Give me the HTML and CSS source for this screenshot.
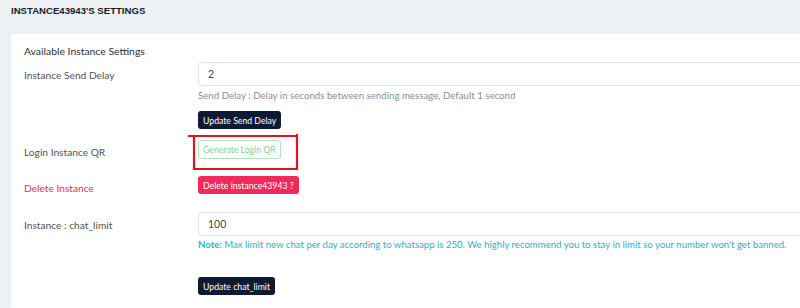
FILE: index.html
```html
<!DOCTYPE html>
<html lang="en">
<head>
    <meta charset="UTF-8">
    <meta name="viewport" content="width=device-width, initial-scale=1.0">
    <title>Instance Settings</title>
    <link rel="stylesheet" href="styles.css">
</head>
<body>

    <h1 class="page-title">INSTANCE43943'S SETTINGS</h1>

    <div class="card">
        <div class="card-title">Available Instance Settings</div>

        <div class="form-row">
            <label class="row-label">Instance Send Delay</label>
            <div class="row-body">
                <input class="field" type="text" value="2">
                <div class="help">Send Delay : Delay in seconds between sending message, Default 1 second</div>
                <button class="btn btn-dark btn-first">Update Send Delay</button>
            </div>
        </div>

        <div class="form-row row-qr">
            <label class="row-label label-btn">Login Instance QR</label>
            <div class="row-body marked">
                <button class="btn btn-outline">Generate Login QR</button>
                <!-- annotation drawn over the button -->
                <svg class="mark" width="112" height="38" viewBox="0 0 112 38">
                    <path d="M0 2 H110 M6 2 V36 M6 35 H110 M109 0 V36" stroke="#e0141e" stroke-width="2.2" fill="none"/>
                </svg>
            </div>
        </div>

        <div class="form-row row-delete">
            <label class="row-label label-btn danger">Delete Instance</label>
            <div class="row-body">
                <button class="btn btn-danger">Delete instance43943 ?</button>
            </div>
        </div>

        <div class="form-row row-limit">
            <label class="row-label">Instance : chat_limit</label>
            <div class="row-body">
                <input class="field" type="text" value="100">
                <div class="help note"><b>Note:</b> Max limit new chat per day according to whatsapp is 250. We highly recommend you to stay in limit so your number won't get banned.</div>
                <button class="btn btn-dark btn-last">Update chat_limit</button>
            </div>
        </div>
    </div>

</body>
</html>
```

FILE: styles.css
```css
:root {
    --bg: #eef1f4;
    --surface: #ffffff;
    --navy: #0e1a34;
    --label: #4f545b;
    --muted: #8b8f95;
    --teal: #2fb2c4;
    --danger: #f22a5c;
    --border: #dde2e8;
}

body {
    font-family: 'Lato', 'Liberation Sans', sans-serif;
    background: var(--bg);
    margin: 0;
    width: 830px;
    overflow: hidden;
}

.page-title {
    font-family: 'Liberation Sans', Arial, sans-serif;
    font-size: 9.6px;
    font-weight: 700;
    color: #151b28;
    line-height: 14px;
    margin: 0;
    padding: 4px 11px 0;
    height: 30px;
}

.card {
    background: var(--surface);
    margin-left: 11px;
    border-radius: 4px;
    padding: 10px 0 14px 13px;
}

.card-title {
    font-size: 10.4px;
    color: #2b2f36;
    line-height: 14px;
    margin-bottom: 4px;
}

.form-row {
    display: grid;
    grid-template-columns: 174px 1fr;
}

.row-label {
    font-size: 10.2px;
    color: var(--label);
    line-height: 24px;
    padding-top: 1px;
}

.label-btn {
    line-height: 14px;
    padding-top: 5px;
}

.danger {
    color: var(--danger);
}

.row-body {
    display: flex;
    flex-direction: column;
    align-items: flex-start;
}

.field {
    box-sizing: border-box;
    width: 100%;
    height: 24px;
    border: 1px solid var(--border);
    border-radius: 4px;
    padding: 0 9px;
    font-family: 'Lato', sans-serif;
    font-size: 10.5px;
    color: #444;
    outline: none;
}

.help {
    font-size: 9.7px;
    color: var(--muted);
    line-height: 14px;
    margin-top: 2px;
    white-space: nowrap;
}

.note {
    color: var(--teal);
    font-size: 9.6px;
}

.btn {
    font-family: 'Lato', sans-serif;
    font-size: 8.7px;
    height: 18px;
    padding: 0 4px;
    border-radius: 3px;
    border: 1px solid transparent;
    cursor: pointer;
}

.btn-dark {
    background: var(--navy);
    color: #fff;
}

.btn-first {
    margin-top: 9px;
}

.btn-last {
    margin-top: 25px;
}

.btn-outline {
    background: #fff;
    color: #86d292;
    border-color: #b2e4b9;
    height: 19px;
}

.btn-danger {
    background: var(--danger);
    color: #fff;
}

.row-qr {
    margin-top: 11px;
}

.row-delete {
    margin-top: 17px;
}

.row-limit {
    margin-top: 17px;
}

.marked {
    position: relative;
}

.mark {
    position: absolute;
    left: -10px;
    top: -6px;
}
```
